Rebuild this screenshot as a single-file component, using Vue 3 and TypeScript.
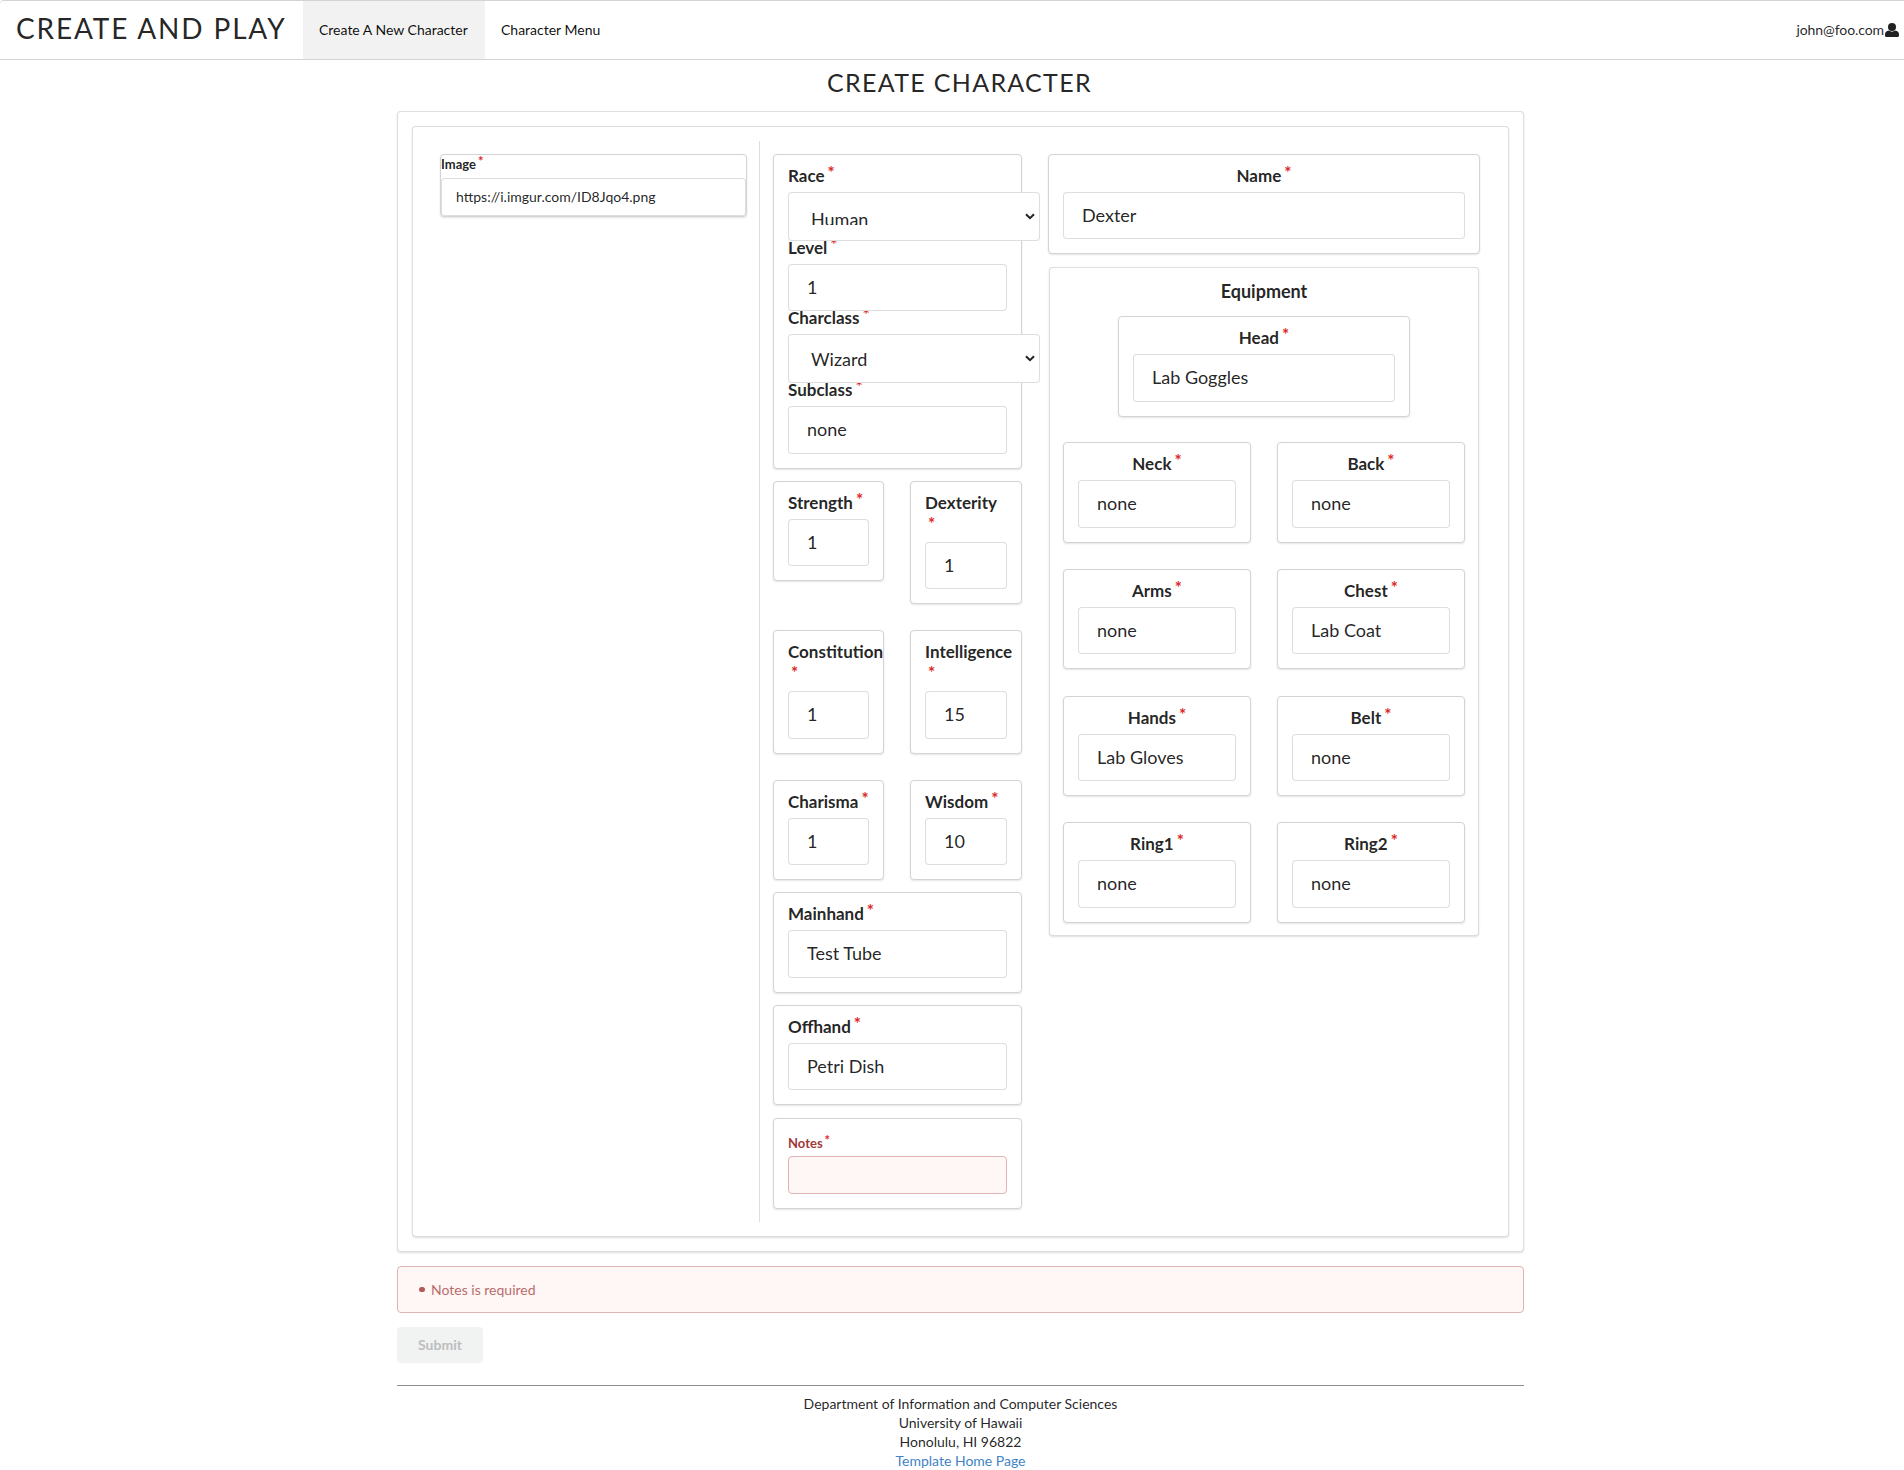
<script setup lang="ts">
interface Field {
  label: string
  value: string
  wrap?: boolean
}

const stats: Field[] = [
  { label: 'Strength', value: '1' },
  { label: 'Dexterity', value: '1', wrap: true },
  { label: 'Constitution', value: '1', wrap: true },
  { label: 'Intelligence', value: '15', wrap: true },
  { label: 'Charisma', value: '1' },
  { label: 'Wisdom', value: '10' },
]

const hands: Field[] = [
  { label: 'Mainhand', value: 'Test Tube' },
  { label: 'Offhand', value: 'Petri Dish' },
]

const equipment: Field[] = [
  { label: 'Neck', value: 'none' },
  { label: 'Back', value: 'none' },
  { label: 'Arms', value: 'none' },
  { label: 'Chest', value: 'Lab Coat' },
  { label: 'Hands', value: 'Lab Gloves' },
  { label: 'Belt', value: 'none' },
  { label: 'Ring1', value: 'none' },
  { label: 'Ring2', value: 'none' },
]
</script>

<template>
  <div class="page">
    <nav class="menu">
      <a class="brand"><span>CREATE AND PLAY</span></a>
      <a class="item active"><span>Create A New Character</span></a>
      <a class="item"><span>Character Menu</span></a>
      <a class="user">
        <span>john@foo.com</span>
        <svg width="14" height="14" viewBox="0 0 14 14" fill="#212122">
          <circle cx="7" cy="4" r="4" />
          <path d="M4 7.6 Q7 9.7 10 7.6 Q14 8.3 14 11.6 V12.4 Q14 14 12.6 14 H1.4 Q0 14 0 12.4 V11.6 Q0 8.3 4 7.6Z" />
        </svg>
      </a>
    </nav>

    <main class="container">
      <h2 class="title"><span>CREATE CHARACTER</span></h2>

      <section class="segment outer">
        <div class="segment inner">
          <div class="col-image">
            <div class="card image-card">
              <label class="label small">Image<i class="star">*</i></label>
              <div class="input small-input">https://i.imgur.com/ID8Jqo4.png</div>
            </div>
          </div>

          <div class="col-stats">
            <div class="card padded">
              <label class="label">Race<i class="star">*</i></label>
              <div class="select low">
                <span class="clip">Human</span>
                <svg class="chevron" width="10" height="7" viewBox="0 0 10 7"><path d="M1 1.2 L5 5.2 L9 1.2" /></svg>
              </div>
              <label class="label">Level<i class="star">*</i></label>
              <div class="input">1</div>
              <label class="label">Charclass<i class="star">*</i></label>
              <div class="select">
                <span>Wizard</span>
                <svg class="chevron" width="10" height="7" viewBox="0 0 10 7"><path d="M1 1.2 L5 5.2 L9 1.2" /></svg>
              </div>
              <label class="label">Subclass<i class="star">*</i></label>
              <div class="input">none</div>
            </div>

            <div class="stats">
              <div v-for="s in stats" :key="s.label" class="card padded">
                <label class="label" :class="{ wrap: s.wrap }">{{ s.label }}<i class="star">*</i></label>
                <div class="input">{{ s.value }}</div>
              </div>
            </div>

            <div v-for="h in hands" :key="h.label" class="card padded">
              <label class="label">{{ h.label }}<i class="star">*</i></label>
              <div class="input">{{ h.value }}</div>
            </div>

            <div class="card padded notes">
              <label class="label small">Notes<i class="star">*</i></label>
              <div class="input small-input error"></div>
            </div>
          </div>

          <div class="col-gear">
            <div class="card padded centered">
              <label class="label">Name<i class="star">*</i></label>
              <div class="input">Dexter</div>
            </div>
            <div class="segment gear">
              <h3>Equipment</h3>
              <div class="card padded centered head">
                <label class="label">Head<i class="star">*</i></label>
                <div class="input">Lab Goggles</div>
              </div>
              <div class="slots">
                <div v-for="e in equipment" :key="e.label" class="card padded centered">
                  <label class="label">{{ e.label }}<i class="star">*</i></label>
                  <div class="input">{{ e.value }}</div>
                </div>
              </div>
            </div>
          </div>
        </div>
      </section>

      <div class="message"><i class="bullet"></i><span>Notes is required</span></div>
      <button class="submit" disabled>Submit</button>

      <footer class="footer">
        <div>Department of Information and Computer Sciences</div>
        <div>University of Hawaii</div>
        <div>Honolulu, HI 96822</div>
        <div><a>Template Home Page</a></div>
      </footer>
    </main>
  </div>
</template>

<style>
body {
  background: #fff;
  overflow: hidden;
}
</style>

<style scoped>
* {
  box-sizing: border-box;
}
.page {
  width: 1904px;
  height: 1470px;
  overflow: hidden;
  font-family: Lato, "Liberation Sans", sans-serif;
  font-size: 14px;
  color: rgba(0, 0, 0, 0.87);
}
.menu {
  display: flex;
  height: 60px;
  border: 1px solid #d4d4d5;
  border-left: 0;
  border-right: 0;
  border-top-left-radius: 4px;
}
.brand {
  width: 303px;
  padding-left: 16px;
  font-size: 28px;
  line-height: 54px;
  letter-spacing: 1.85px;
  white-space: nowrap;
}
.item {
  padding: 0 16px;
  line-height: 58px;
  white-space: nowrap;
  color: rgba(0, 0, 0, 0.95);
}
.item.active {
  width: 182px;
  background: #f2f2f2;
}
.user {
  display: flex;
  align-items: center;
  gap: 1px;
  margin-left: auto;
  padding-right: 5px;
}
.user span {
  padding-bottom: 2px;
  letter-spacing: -0.08px;
}
.container {
  width: 1127px;
  margin-left: 397px;
}
.title {
  height: 51px;
  margin: 0;
  padding-right: 2px;
  text-align: center;
  font-size: 25px;
  font-weight: 400;
  line-height: 45px;
  letter-spacing: 1.3px;
  white-space: nowrap;
}
.segment {
  border: 1px solid rgba(34, 36, 38, 0.15);
  border-radius: 4px;
  background: #fff;
  box-shadow: 0 1px 2px 0 rgba(34, 36, 38, 0.15);
}
.outer {
  height: 1141px;
  padding: 14px;
}
.inner {
  display: flex;
  height: 1111px;
  padding: 14px 14px 14px 13px;
}
.col-image {
  width: 334px;
  border-right: 1px solid rgba(34, 36, 38, 0.15);
  padding: 13px 12px 0 14px;
}
.col-stats {
  display: flex;
  flex-direction: column;
  gap: 12.3px;
  width: 249px;
  margin-left: 13px;
  padding-top: 13px;
}
.col-gear {
  width: 432px;
  margin-left: 26px;
  padding-top: 13px;
}
.card {
  border: 1px solid #d4d4d5;
  border-radius: 4px;
  background: #fff;
  box-shadow: 0 1px 2px 0 rgba(34, 36, 38, 0.12);
}
.padded {
  padding: 14px;
}
.image-card {
  height: 63px;
}
.label {
  display: block;
  height: 23px;
  font-size: 17px;
  font-weight: 700;
  line-height: 13px;
  white-space: nowrap;
}
.centered .label {
  text-align: center;
}
.star {
  position: relative;
  top: -3px;
  display: inline-block;
  margin-left: 3px;
  font-style: normal;
  font-weight: 700;
  color: #db2828;
}
.label.wrap {
  height: 46px;
}
.wrap .star {
  display: block;
  top: 8px;
}
.label.small {
  height: 23px;
  font-size: 13px;
  line-height: 18px;
}
.small .star {
  top: -3px;
  margin-left: 2px;
}
.input {
  position: relative;
  z-index: 1;
  height: 47.4px;
  padding-left: 18px;
  border: 1px solid rgba(34, 36, 38, 0.15);
  border-radius: 4px;
  background: #fff;
  font-size: 18px;
  line-height: 45.6px;
  white-space: nowrap;
}
.small-input {
  height: 38px;
  padding-left: 14px;
  font-size: 14px;
  line-height: 36px;
}
.select {
  position: relative;
  z-index: 1;
  width: 252px;
  height: 48.9px;
  padding: 14px 4px 0 22px;
  display: flex;
  justify-content: space-between;
  border: 1px solid rgba(34, 36, 38, 0.15);
  border-radius: 4px;
  background: #fff;
  font-size: 18px;
  line-height: 20px;
}
.select.low {
  padding-top: 16px;
}
.clip {
  height: 16px;
  overflow: hidden;
}
.chevron {
  margin-top: 6px;
  fill: none;
  stroke: #222;
  stroke-width: 2;
}
.low .chevron {
  margin-top: 4px;
}
.stats {
  display: grid;
  grid-template-columns: 111px 112px;
  gap: 26px;
  align-items: start;
}
.notes {
  height: 91px;
}
.notes .label {
  padding-top: 1px;
  color: #9f3a38;
}
.error {
  border-color: #e0b4b4;
  background: #fff6f6;
}
.gear {
  width: 430px;
  height: 669px;
  margin: 13px 0 0 1px;
  padding: 14px 13px;
}
.gear h3 {
  height: 34px;
  margin: 0;
  text-align: center;
  font-size: 18px;
  font-weight: 700;
  line-height: 18px;
}
.head {
  width: 292px;
  margin: 0 auto;
}
.slots {
  display: grid;
  grid-template-columns: 188px 188px;
  gap: 26.2px 26px;
  margin-top: 25.7px;
}
.message {
  display: flex;
  align-items: center;
  height: 47px;
  margin-top: 14px;
  padding-left: 21px;
  border: 1px solid #e0b4b4;
  border-radius: 4px;
  background: #fff6f6;
  color: #b96d6b;
}
.bullet {
  width: 5.5px;
  height: 5.5px;
  margin-right: 6.5px;
  border-radius: 50%;
  background: #b25856;
}
.submit {
  display: block;
  width: 86px;
  height: 36px;
  margin: 14px 0 0;
  padding: 0;
  border: 0;
  border-radius: 4px;
  background: #f1f2f2;
  color: #bdbebe;
  font: 700 14px/36px Lato, sans-serif;
}
.footer {
  margin-top: 22px;
  padding-top: 8px;
  border-top: 1px solid #8c8e8e;
  text-align: center;
  line-height: 19px;
}
.footer a {
  color: #4183c4;
}
</style>
